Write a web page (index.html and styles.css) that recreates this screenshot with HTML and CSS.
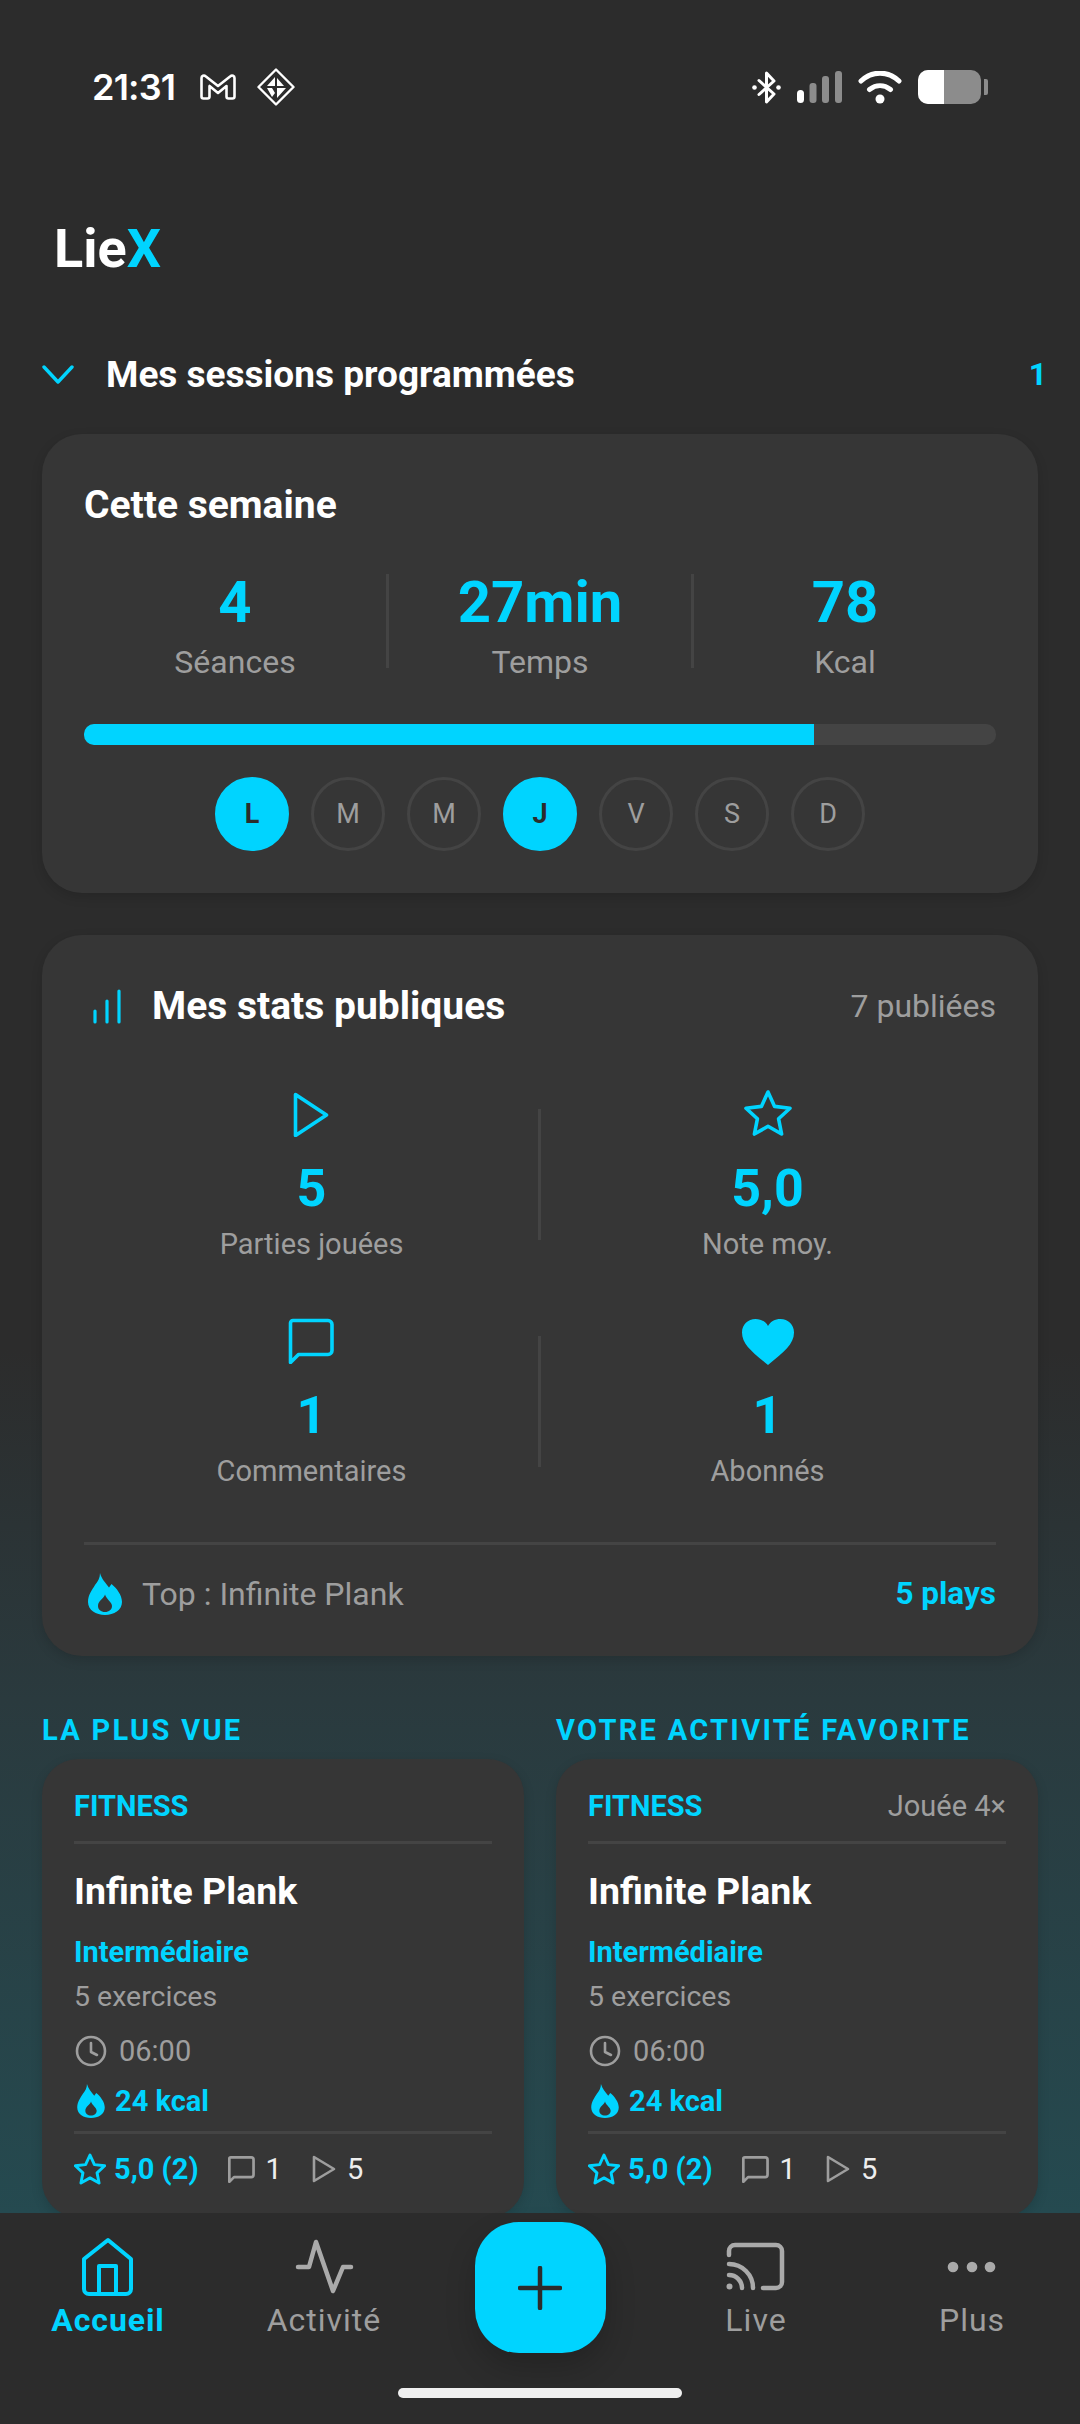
FILE: index.html
```html
<!DOCTYPE html>
<html lang="fr">
<head>
<meta charset="utf-8">
<title>LieX</title>
<link rel="stylesheet" href="styles.css">
</head>
<body>
<div class="screen">
  <div class="scroll">
    <header class="status">
      <div class="status-left">
        <span class="clock">21:31</span>
        <svg class="ic-gmail" viewBox="0 0 36 26"><path d="M1.500 22.500V4C1.500 1.800 4 .8 5.600 2.200L18 12 30.400 2.200C32 .8 34.500 1.800 34.500 4V22.500c0 1.200-.8 2-2 2H28.500c-1.200 0-2-.8-2-2V12L18 19 9.500 12V22.500c0 1.200-.8 2-2 2H3.500c-1.200 0-2-.8-2-2z" fill="none" stroke="#fff" stroke-width="2.600" stroke-linejoin="round"/></svg>
        <svg class="ic-diamond" viewBox="0 0 38 38"><path d="M19 1.500 36.500 19 19 36.500 1.500 19z" fill="none" stroke="#fff" stroke-width="2.400" stroke-linejoin="round"/><path d="M18 9v9h-8zM20 10l7 8h-7zM10 20h5l3 5-3 4zM20 20h9l-9 10z" fill="#fff"/></svg>
      </div>
      <div class="status-right">
        <svg class="ic-bt" viewBox="0 0 29 33"><path d="M7 9.500l15 13.500-7.500 8V2L22 10 7 23.500" fill="none" stroke="#fff" stroke-width="3" stroke-linejoin="round" stroke-linecap="round"/><circle cx="2.500" cy="16.500" r="2.300" fill="#fff"/><circle cx="26.500" cy="16.500" r="2.300" fill="#fff"/></svg>
        <svg class="ic-signal" viewBox="0 0 45 32"><rect x="0" y="19" width="7" height="13" rx="3.500" fill="#fff"/><rect x="12.500" y="12" width="7" height="20" rx="3" fill="#8c8c8c"/><rect x="25" y="5" width="7" height="27" rx="3" fill="#8c8c8c"/><rect x="38" y="0" width="7" height="32" rx="3" fill="#8c8c8c"/></svg>
        <svg class="ic-wifi" viewBox="0 0 44 33"><path d="M3 10C14-.5 30-.5 41 10M11.500 18.500c6.500-5 14.500-5 21 0" fill="none" stroke="#fff" stroke-width="5" stroke-linecap="round"/><circle cx="22" cy="28" r="4.500" fill="#fff"/></svg>
        <div class="battery"><div class="battery-body"><div class="battery-fill"></div></div><div class="battery-tip"></div></div>
      </div>
    </header>

    <h1 class="brand">Lie<span class="accent">X</span></h1>

    <div class="sessions">
      <svg class="ic-chev" viewBox="0 0 32 19"><path d="M2 2l14 15L30 2" fill="none" stroke="#00d4ff" stroke-width="3.400" stroke-linecap="round" stroke-linejoin="round"/></svg>
      <span class="sessions-title">Mes sessions programmées</span>
      <span class="sessions-count">1</span>
    </div>

    <section class="card week">
      <h2 class="card-title">Cette semaine</h2>
      <div class="week-stats">
        <div class="wstat"><div class="wstat-num">4</div><div class="wstat-label">Séances</div></div>
        <div class="wsep"></div>
        <div class="wstat"><div class="wstat-num">27min</div><div class="wstat-label">Temps</div></div>
        <div class="wsep"></div>
        <div class="wstat"><div class="wstat-num">78</div><div class="wstat-label">Kcal</div></div>
      </div>
      <div class="progress"><div class="progress-fill" style="width:80%"></div></div>
      <div class="days">
        <div class="day on">L</div><div class="day">M</div><div class="day">M</div><div class="day on">J</div><div class="day">V</div><div class="day">S</div><div class="day">D</div>
      </div>
    </section>

    <section class="card pub">
      <div class="pub-head">
        <svg class="ic-bars" viewBox="0 0 28 35"><path d="M2 33V22M14 33V12M26 33V2" fill="none" stroke="#00d4ff" stroke-width="3.200" stroke-linecap="round"/></svg>
        <h2 class="card-title pub-title">Mes stats publiques</h2>
        <span class="pub-count">7 publiées</span>
      </div>
      <div class="pub-grid">
        <div class="pstat">
          <svg class="pic" viewBox="0 0 48 48"><path d="M7.500 5.500 38.500 26 7.500 46.500z" fill="none" stroke="#00d4ff" stroke-width="3.600" stroke-linejoin="round"/></svg>
          <div class="pstat-num">5</div><div class="pstat-label">Parties jouées</div>
        </div>
        <div class="pstat pstat-r">
          <svg class="pic" viewBox="0 0 48 48"><path d="M24 3l6.600 14.400 15.400 1.800-11.400 10.600 3 15.200L24 37.300 10.400 45l3-15.200L2 19.200l15.400-1.800z" fill="none" stroke="#00d4ff" stroke-width="3.600" stroke-linejoin="round"/></svg>
          <div class="pstat-num">5,0</div><div class="pstat-label">Note moy.</div>
        </div>
        <div class="pstat">
          <svg class="pic" viewBox="0 0 48 48"><path d="M6.500 4h35a4 4 0 0 1 4 4v26a4 4 0 0 1-4 4H12L4 46V6.500A2.500 2.500 0 0 1 6.500 4z" transform="translate(-1.500 .5)" fill="none" stroke="#00d4ff" stroke-width="3.600" stroke-linejoin="round"/></svg>
          <div class="pstat-num">1</div><div class="pstat-label">Commentaires</div>
        </div>
        <div class="pstat pstat-r">
          <svg class="pic pic-heart" viewBox="0 0 52 46"><path d="M26 46C10 33 0 25 0 13.500 0 5.500 6 0 13.500 0 19 0 23.500 2.500 26 7c2.500-4.500 7-7 12.500-7C46 0 52 5.500 52 13.500 52 25 42 33 26 46z" fill="#00d4ff"/></svg>
          <div class="pstat-num">1</div><div class="pstat-label">Abonnés</div>
        </div>
      </div>
      <div class="pub-foot">
        <svg class="ic-flame-lg" viewBox="0 0 34 42"><path fill-rule="evenodd" d="M12 0c1.500 6 5.500 9.500 9 14.500l2.500-3.500C28.500 15 34 22 34 29c0 8-8 13-17 13S0 37 0 29c0-7 4-12 7-17 3-4 5-7 5-12zm5 21.500c-1 4-7 6-7 11.500 0 3.500 3 6 7 6s7-2.500 7-6c0-4-5.500-6.500-7-11.500z" fill="#00d4ff"/></svg>
        <span class="pub-top">Top : Infinite Plank</span>
        <span class="pub-plays">5 plays</span>
      </div>
    </section>

    <div class="duo">
      <div class="duo-col">
        <h3 class="duo-label">LA PLUS VUE</h3>
        <article class="act">
          <div class="act-head"><span class="act-cat">FITNESS</span></div>
          <div class="act-title">Infinite Plank</div>
          <div class="act-level">Intermédiaire</div>
          <div class="act-ex">5 exercices</div>
          <div class="act-time">
            <svg class="ic-clock" viewBox="0 0 32 32"><circle cx="16" cy="16" r="14" fill="none" stroke="#9e9e9e" stroke-width="2.600"/><path d="M16 8v9l6 3" fill="none" stroke="#9e9e9e" stroke-width="2.600" stroke-linecap="round" stroke-linejoin="round"/></svg>
            <span>06:00</span>
          </div>
          <div class="act-kcal">
            <svg class="ic-flame" viewBox="0 0 34 42"><path fill-rule="evenodd" d="M12 0c1.500 6 5.500 9.500 9 14.500l2.500-3.500C28.500 15 34 22 34 29c0 8-8 13-17 13S0 37 0 29c0-7 4-12 7-17 3-4 5-7 5-12zm5 21.500c-1 4-7 6-7 11.500 0 3.500 3 6 7 6s7-2.500 7-6c0-4-5.500-6.500-7-11.500z" fill="#00d4ff"/></svg>
            <span>24 kcal</span>
          </div>
          <div class="act-foot">
            <svg class="ic-star" viewBox="0 0 48 48"><path d="M24 3l6.600 14.400 15.400 1.800-11.400 10.600 3 15.200L24 37.300 10.400 45l3-15.200L2 19.200l15.400-1.800z" fill="none" stroke="#00d4ff" stroke-width="4.400" stroke-linejoin="round"/></svg>
            <span class="act-rate">5,0 (2)</span>
            <svg class="ic-msg" viewBox="0 0 48 48"><path d="M6.500 4h35a4 4 0 0 1 4 4v26a4 4 0 0 1-4 4H12L4 46V6.500A2.500 2.500 0 0 1 6.500 4z" fill="none" stroke="#9e9e9e" stroke-width="4.600" stroke-linejoin="round"/></svg>
            <span class="act-n act-n1">1</span>
            <svg class="ic-play" viewBox="0 0 24 28"><path d="M2 2 22 14 2 26z" fill="none" stroke="#9e9e9e" stroke-width="2.600" stroke-linejoin="round"/></svg>
            <span class="act-n">5</span>
          </div>
        </article>
      </div>
      <div class="duo-col">
        <h3 class="duo-label">VOTRE ACTIVITÉ FAVORITE</h3>
        <article class="act">
          <div class="act-head"><span class="act-cat">FITNESS</span><span class="act-played">Jouée 4×</span></div>
          <div class="act-title">Infinite Plank</div>
          <div class="act-level">Intermédiaire</div>
          <div class="act-ex">5 exercices</div>
          <div class="act-time">
            <svg class="ic-clock" viewBox="0 0 32 32"><circle cx="16" cy="16" r="14" fill="none" stroke="#9e9e9e" stroke-width="2.600"/><path d="M16 8v9l6 3" fill="none" stroke="#9e9e9e" stroke-width="2.600" stroke-linecap="round" stroke-linejoin="round"/></svg>
            <span>06:00</span>
          </div>
          <div class="act-kcal">
            <svg class="ic-flame" viewBox="0 0 34 42"><path fill-rule="evenodd" d="M12 0c1.500 6 5.500 9.500 9 14.500l2.500-3.500C28.500 15 34 22 34 29c0 8-8 13-17 13S0 37 0 29c0-7 4-12 7-17 3-4 5-7 5-12zm5 21.500c-1 4-7 6-7 11.500 0 3.500 3 6 7 6s7-2.500 7-6c0-4-5.500-6.500-7-11.500z" fill="#00d4ff"/></svg>
            <span>24 kcal</span>
          </div>
          <div class="act-foot">
            <svg class="ic-star" viewBox="0 0 48 48"><path d="M24 3l6.600 14.400 15.400 1.800-11.400 10.600 3 15.200L24 37.300 10.400 45l3-15.200L2 19.200l15.400-1.800z" fill="none" stroke="#00d4ff" stroke-width="4.400" stroke-linejoin="round"/></svg>
            <span class="act-rate">5,0 (2)</span>
            <svg class="ic-msg" viewBox="0 0 48 48"><path d="M6.500 4h35a4 4 0 0 1 4 4v26a4 4 0 0 1-4 4H12L4 46V6.500A2.500 2.500 0 0 1 6.500 4z" fill="none" stroke="#9e9e9e" stroke-width="4.600" stroke-linejoin="round"/></svg>
            <span class="act-n act-n1">1</span>
            <svg class="ic-play" viewBox="0 0 24 28"><path d="M2 2 22 14 2 26z" fill="none" stroke="#9e9e9e" stroke-width="2.600" stroke-linejoin="round"/></svg>
            <span class="act-n">5</span>
          </div>
        </article>
      </div>
    </div>
  </div>

  <nav class="nav">
    <div class="nav-item active">
      <svg class="nav-ic" viewBox="0 0 60 60"><path d="M6 22 30 3l23 19v30a5 5 0 0 1-5 5H11a5 5 0 0 1-5-5z" fill="none" stroke="#00d4ff" stroke-width="4" stroke-linejoin="round"/><path d="M21 57V29h17v28" fill="none" stroke="#00d4ff" stroke-width="4" stroke-linejoin="round"/></svg>
      <span>Accueil</span>
    </div>
    <div class="nav-item">
      <svg class="nav-ic" viewBox="0 0 60 60"><path d="M4 30H15L22 5 39 54 49 30H57" fill="none" stroke="#aaa" stroke-width="4.500" stroke-linecap="round" stroke-linejoin="round"/></svg>
      <span>Activité</span>
    </div>
    <div class="nav-fab-wrap">
      <div class="fab"><svg class="fab-ic" viewBox="0 0 44 44"><path d="M22 2v40M2 22h40" fill="none" stroke="#2c2c2c" stroke-width="4.500" stroke-linecap="round"/></svg></div>
    </div>
    <div class="nav-item">
      <svg class="nav-ic" viewBox="0 0 60 60"><path d="M3 18v-4a6 6 0 0 1 6-6h41a6 6 0 0 1 6 6v31a6 6 0 0 1-6 6H37" fill="none" stroke="#aaa" stroke-width="4.500" stroke-linecap="round" stroke-linejoin="round"/><path d="M3 27a24 24 0 0 1 24 24M3 38a13 13 0 0 1 13 13" fill="none" stroke="#aaa" stroke-width="4.500" stroke-linecap="round"/><circle cx="3.500" cy="49.500" r="3" fill="#aaa"/></svg>
      <span>Live</span>
    </div>
    <div class="nav-item">
      <svg class="nav-ic" viewBox="0 0 60 60"><circle cx="11" cy="30" r="5.300" fill="#aaa"/><circle cx="30" cy="30" r="5.300" fill="#aaa"/><circle cx="48" cy="30" r="5.300" fill="#aaa"/></svg>
      <span>Plus</span>
    </div>
    <div class="home-bar"></div>
  </nav>
</div>
</body>
</html>
```

FILE: styles.css
```css
* { box-sizing: border-box; margin: 0; padding: 0; }
html, body { width: 1080px; height: 2424px; overflow: hidden; }
body { font-family: Roboto, "Liberation Sans", sans-serif; background: #2c2c2c; color: #fff; }
.screen { width: 1080px; height: 2424px; display: flex; flex-direction: column; overflow: hidden;
  background: linear-gradient(180deg, #2c2c2c 0, #2c2c2c 1350px, #2a3a3e 1700px, #254a50 2213px); }
.scroll { height: 2213px; flex: none; overflow: hidden; }
.accent { color: #00d4ff; }

.status { height: 219px; padding: 67px 92px 0 92px; display: flex; justify-content: space-between; align-items: flex-start; }
.status-left { display: flex; align-items: center; height: 40px; }
.clock { font-size: 36px; font-weight: 600; font-family: Inter, sans-serif; line-height: 40px; width: 108px; letter-spacing: -.8px; }
.ic-gmail { width: 36px; height: 26px; }
.ic-diamond { width: 38px; height: 38px; margin-left: 21px; }
.status-right { display: flex; align-items: center; height: 40px; }
.ic-bt { width: 29px; height: 33px; }
.ic-signal { width: 45px; height: 32px; margin-left: 16px; }
.ic-wifi { width: 44px; height: 33px; margin-left: 16px; }
.battery { display: flex; align-items: center; margin-left: 16px; }
.battery-body { width: 63px; height: 34px; border-radius: 10px; background: #8c8c8c; overflow: hidden; }
.battery-fill { width: 26px; height: 100%; background: #fff; }
.battery-tip { width: 4px; height: 16px; margin-left: 3px; background: #8c8c8c; border-radius: 0 2px 2px 0; }

.brand { font-size: 54px; font-weight: 700; line-height: 60px; margin: 0 0 0 54px; height: 60px; }

.sessions { display: flex; align-items: center; height: 44px; margin: 73px 33px 0 42px; }
.ic-chev { width: 32px; height: 19px; flex: none; margin-right: 32px; }
.sessions-title { font-size: 37px; font-weight: 700; flex: 1; }
.sessions-count { font-size: 32px; font-weight: 700; color: #00d4ff; }

.card { background: #363636; border-radius: 40px; margin: 0 42px; box-shadow: 0 4px 12px rgba(0,0,0,.14); }
.week { margin-top: 38px; height: 459px; padding: 49px 42px 0; }
.card-title { font-size: 39px; font-weight: 700; line-height: 44px; }

.week-stats { display: flex; align-items: flex-start; margin-top: 47px; }
.wstat { flex: 1; text-align: center; }
.wstat-num { font-size: 58px; font-weight: 700; color: #00d4ff; line-height: 56px; }
.wstat-label { font-size: 32px; color: #9e9e9e; line-height: 40px; margin-top: 12px; }
.wsep { width: 3px; height: 94px; background: #444; flex: none; }

.progress { height: 21px; background: #444; border-radius: 10px; overflow: hidden; margin-top: 42px; }
.progress-fill { height: 100%; background: #00d4ff; }
.days { display: flex; justify-content: center; gap: 22px; margin-top: 32px; }
.day { width: 74px; height: 74px; border-radius: 50%; border: 3px solid #444; display: flex; align-items: center; justify-content: center; font-size: 27px; color: #9e9e9e; }
.day.on { background: #00d4ff; border-color: #00d4ff; color: #2c2c2c; font-weight: 700; }

.pub { margin-top: 42px; height: 721px; padding: 48px 42px 0; }
.pub-head { display: flex; align-items: center; height: 46px; }
.ic-bars { width: 28px; height: 35px; margin-left: 9px; flex: none; }
.pub-title { flex: 1; margin-left: 31px; }
.pub-count { font-size: 32px; color: #9e9e9e; }
.pub-grid { display: grid; grid-template-columns: 455px 457px; grid-auto-rows: 227px; margin-top: 60px; }
.pstat { display: flex; flex-direction: column; align-items: center; position: relative; }
.pstat-r::before { content: ""; position: absolute; left: -1px; top: 20px; width: 3px; height: 131px; background: #444; }
.pic { width: 48px; height: 48px; flex: none; }
.pic-heart { width: 52px; height: 46px; margin: 3px 0 -1px; }
.pstat-num { font-size: 52px; font-weight: 700; color: #00d4ff; line-height: 60px; margin-top: 22px; }
.pstat-label { font-size: 29px; color: #9e9e9e; line-height: 36px; margin-top: 7px; }
.pub-foot { display: flex; align-items: center; border-top: 3px solid #444; margin-top: -1px; height: 100px; }
.ic-flame-lg { width: 34px; height: 42px; margin-left: 4px; flex: none; }
.pub-top { flex: 1; font-size: 32px; color: #9e9e9e; margin-left: 20px; }
.pub-plays { font-size: 31.500px; font-weight: 700; color: #00d4ff; }

.duo { display: flex; gap: 32px; margin: 57px 42px 0; }
.duo-col { flex: 1; min-width: 0; }
.duo-label { font-size: 29px; font-weight: 700; color: #00d4ff; letter-spacing: 2.300px; line-height: 34px; white-space: nowrap; }
.act { background: #363636; border-radius: 36px; margin-top: 12px; height: 458px; padding: 26px 32px 0; box-shadow: 0 4px 12px rgba(0,0,0,.14); }
.act-head { display: flex; justify-content: space-between; align-items: center; height: 59px; border-bottom: 3px solid #444; padding-bottom: 14px; }
.act-cat { font-size: 29px; font-weight: 700; color: #00d4ff; }
.act-played { font-size: 29px; color: #9e9e9e; }
.act-title { font-size: 37.500px; font-weight: 700; line-height: 44px; margin-top: 25px; }
.act-level { font-size: 29px; font-weight: 700; color: #00d4ff; line-height: 36px; margin-top: 21px; }
.act-ex { font-size: 28.500px; color: #9e9e9e; line-height: 36px; margin-top: 9px; }
.act-time { display: flex; align-items: center; height: 36px; margin-top: 18px; font-size: 29px; color: #9e9e9e; }
.ic-clock { width: 32px; height: 32px; flex: none; margin: 0 12px 0 1px; }
.act-kcal { display: flex; align-items: center; height: 36px; margin-top: 14px; font-size: 29px; font-weight: 700; color: #00d4ff; }
.ic-flame { width: 28px; height: 34px; flex: none; margin: 0 10px 0 3px; }
.act-foot { display: flex; align-items: center; border-top: 3px solid #444; margin-top: 12px; padding-top: 20px; height: 53px; }
.ic-star { width: 32px; height: 32px; flex: none; margin-right: 8px; }
.act-rate { font-size: 29px; font-weight: 700; color: #00d4ff; margin-right: 28px; }
.ic-msg { width: 28px; height: 28px; flex: none; margin-right: 11px; }
.act-n { font-size: 29px; color: #eee; }
.act-n1 { margin-right: 30px; }
.ic-play { width: 24px; height: 28px; flex: none; margin-right: 11px; }

.nav { height: 211px; flex: none; background: #2c2c2c; display: grid; grid-template-columns: repeat(5, 216px); position: relative; }
.nav-item { display: flex; flex-direction: column; align-items: center; padding-top: 24px; font-size: 32px; letter-spacing: 1px; color: #9e9e9e; height: 128px; }
.nav-item.active { color: #00d4ff; font-weight: 700; letter-spacing: .9px; }
.nav-ic { width: 60px; height: 60px; flex: none; }
.nav-item span { line-height: 40px; margin-top: 3px; }
.nav-fab-wrap { display: flex; justify-content: center; padding-top: 9px; }
.fab { width: 131px; height: 131px; border-radius: 44px; background: #00d4ff; display: flex; align-items: center; justify-content: center; box-shadow: 0 14px 30px rgba(0,0,0,.2); }
.fab-ic { width: 44px; height: 44px; }
.home-bar { position: absolute; left: 398px; top: 175px; width: 284px; height: 10px; border-radius: 5px; background: #f0f0f0; }
```
